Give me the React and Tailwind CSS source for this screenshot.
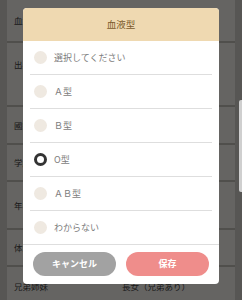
import React from "react";

const font = { fontFamily: '"Noto Sans CJK JP", "Noto Sans", sans-serif' };

const rows = [
  { label: "血液型", h: "h-[43px]", align: "items-center" },
  { label: "出身地", h: "h-[64px]", align: "items-start pt-[15px]" },
  { label: "國籍", h: "h-[38px]", align: "items-center" },
  { label: "学歴", h: "h-[37px]", align: "items-center" },
  { label: "年収", h: "h-[48px]", align: "items-center" },
  { label: "体型", h: "h-[37px]", align: "items-center" },
  { label: "兄弟姉妹", h: "h-[40px]", align: "items-center", value: "長女（兄弟あり）" },
];

const options = ["選択してください", "Ａ型", "Ｂ型", "O型", "ＡＢ型", "わからない"];
const selected = 3;

export default function App() {
  return (
    <div className="relative w-[242px] h-[300px] overflow-hidden bg-[#d9d6d1]" style={font}>
      {/* underlying page */}
      <div className="mx-[7px] flex flex-col">
        {rows.map((r, i) => (
          <div
            key={i}
            className={`flex ${r.align} ${r.h} bg-[#fcf9f4] border-b-2 border-[#c9c5bf] px-[7px] text-[8.5px] text-[#444]`}
          >
            <span className="w-[108px] shrink-0">{r.label}</span>
            {r.value && <span>{r.value}</span>}
          </div>
        ))}
      </div>

      {/* overlay */}
      <div className="absolute inset-0 bg-black/60" />

      {/* scroll indicator */}
      <div className="absolute right-0 top-[100px] w-[3px] h-[92px] rounded-l-[2px] bg-[#cfcfcf]" />

      {/* modal */}
      <div className="absolute left-[23px] top-[8px] w-[196px] h-[276px] rounded-[4px] bg-white overflow-hidden flex flex-col">
        <div className="h-[33px] shrink-0 bg-[#efd9b1] flex items-center justify-center text-[9.5px] text-[#7a5a2c]">
          血液型
        </div>
        <div className="flex flex-col">
          {options.map((o, i) => (
            <div
              key={i}
              className={`h-[34px] flex items-center ${i < options.length - 1 ? "mx-[7px] border-b border-[#dedede] pl-[4px]" : "border-b border-[#dedede] pl-[11px]"}`}
            >
              {i === selected ? (
                <span className="w-[13px] h-[13px] rounded-full border-[3.5px] border-[#333] bg-white shrink-0" />
              ) : (
                <span className="w-[13px] h-[13px] rounded-full bg-[#efe9e1] shrink-0" />
              )}
              <span className="ml-[7px] text-[9px] text-[#7d7d7d]">{o}</span>
            </div>
          ))}
        </div>
        <div className="flex gap-[10px] px-[10px] pt-[7px]">
          <button className="flex-1 h-[24px] rounded-full bg-[#a2a2a2] text-white text-[9px] font-bold">
            キャンセル
          </button>
          <button className="flex-1 h-[24px] rounded-full bg-[#ef8d8b] text-white text-[9px] font-bold">
            保存
          </button>
        </div>
      </div>
    </div>
  );
}
